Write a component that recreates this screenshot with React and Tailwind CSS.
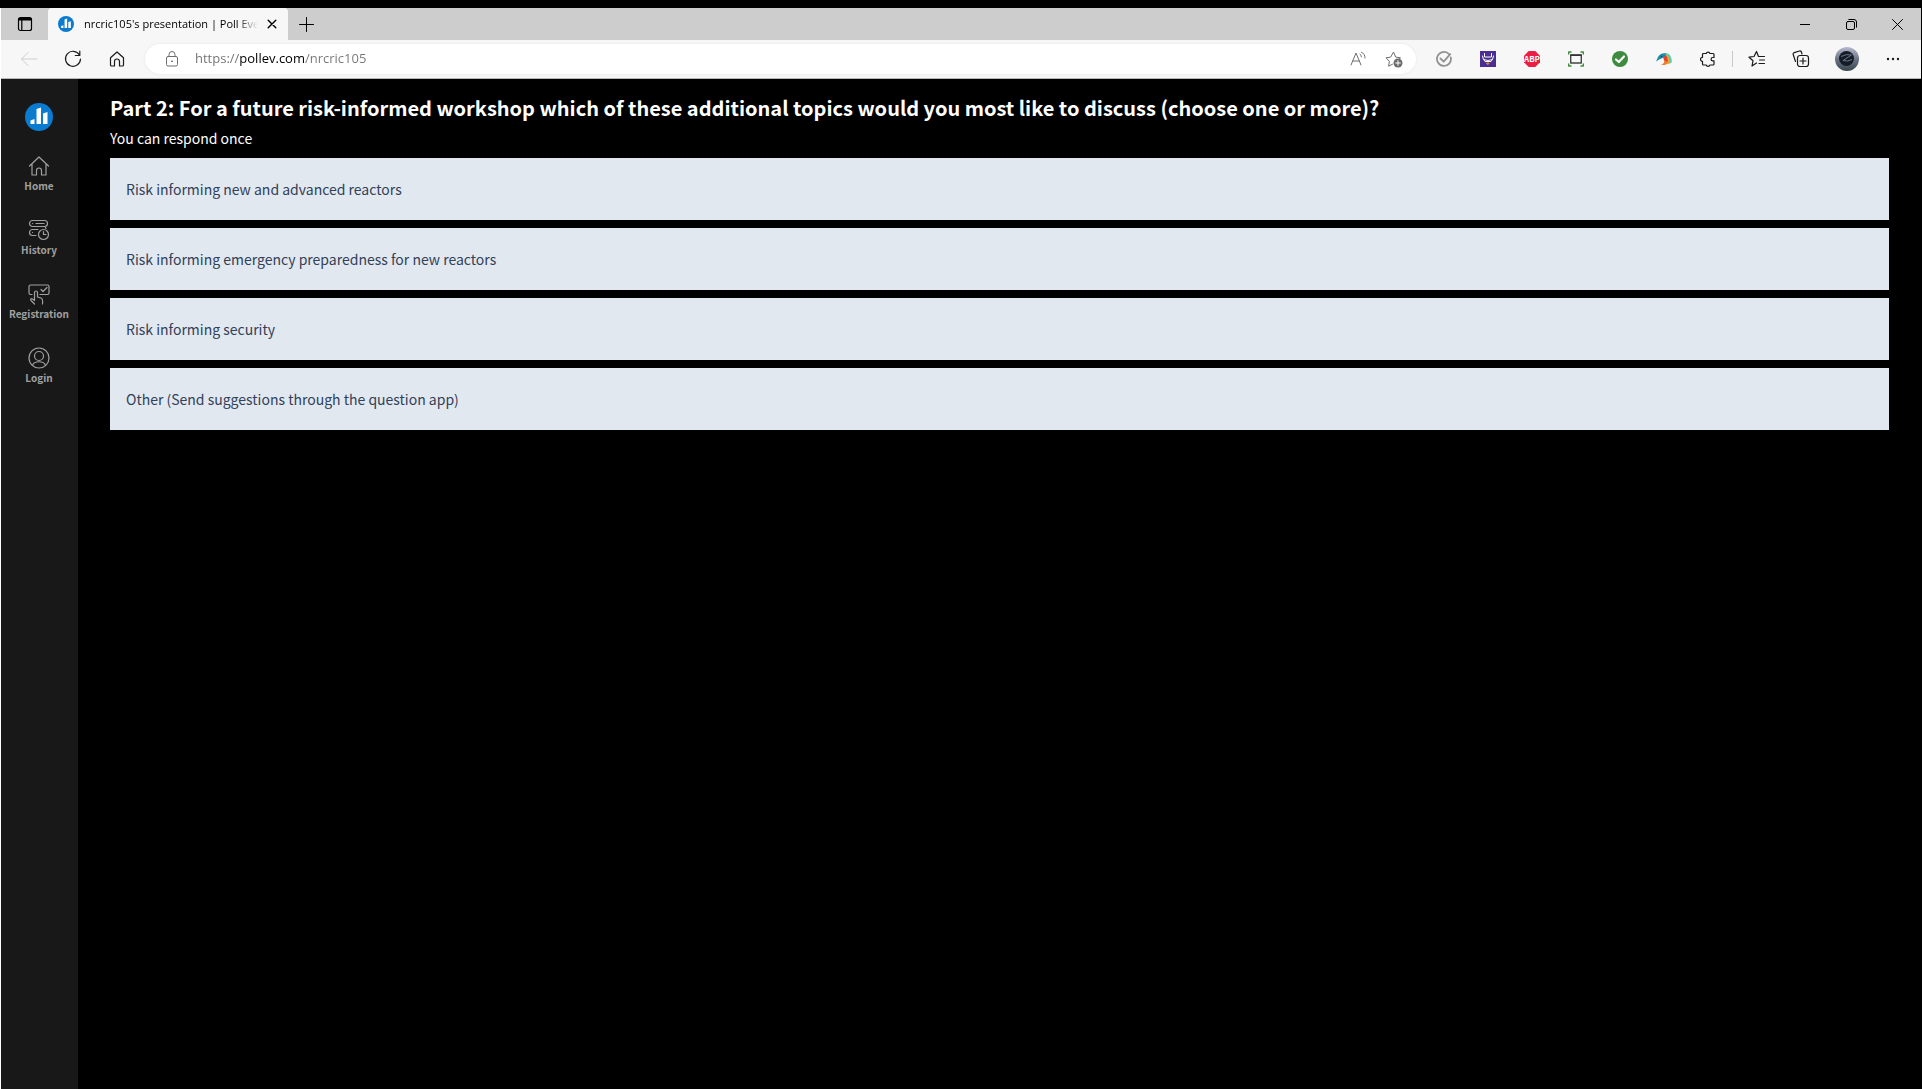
import React from "react";

const options = [
  "Risk informing new and advanced reactors",
  "Risk informing emergency preparedness for new reactors",
  "Risk informing security",
  "Other (Send suggestions through the question app)",
];

const Icon = ({ size = 18, box = 18, width = 1, className = "", children }) => (
  <svg
    width={size}
    height={size}
    viewBox={`0 0 ${box} ${box}`}
    fill="none"
    stroke="currentColor"
    strokeWidth={width}
    strokeLinecap="round"
    strokeLinejoin="round"
    className={`shrink-0 ${className}`}
    aria-hidden="true"
  >
    {children}
  </svg>
);

const PollLogo = ({ size }) => (
  <svg width={size} height={size} viewBox="0 0 28 28" className="shrink-0" aria-hidden="true">
    <circle cx="14" cy="14" r="14" fill="#0b7bd0" />
    <path d="M5.500 17.500l4-1.500v5h-4zM11.500 6l4.500-1.500v16.500h-4.500zM18 10.500l4.500-1.500v12h-4.500z" fill="#fff" />
  </svg>
);

const ToolButton = ({ label, className = "w-11", children }) => (
  <button type="button" aria-label={label} className={`flex h-8 shrink-0 items-center justify-center ${className}`}>
    {children}
  </button>
);

/* Barre des onglets */
const TabBar = () => (
  <div className="flex h-8 items-stretch bg-[#cdcdcd] text-black">
    <button type="button" aria-label="Tab actions" className="flex w-[47px] items-center justify-center">
      <Icon size={16} box={16} width={1.2}>
        <rect x="1.500" y="1.500" width="13" height="13" rx="2" />
        <path d="M2 3.800h12M2 2.600h12M4.800 4.500v9.500" />
      </Icon>
    </button>

    <div className="flex w-60 items-center rounded-t bg-[#f7f7f7] pl-2.5 pr-1.5">
      <PollLogo size={16} />
      <span className="ml-2.5 w-[174px] overflow-hidden whitespace-nowrap text-[11px] [mask-image:linear-gradient(to_right,black_88%,transparent)]">
        nrcric105's presentation | Poll Eve
      </span>
      <button type="button" aria-label="Close tab" className="ml-1 flex size-5 items-center justify-center">
        <Icon size={10} box={10} width={1.4}>
          <path d="M1.200 1.200l7.600 7.600M8.800 1.200l-7.600 7.600" />
        </Icon>
      </button>
    </div>

    <button type="button" aria-label="New tab" className="flex w-9 items-center justify-center">
      <Icon size={15} box={15}>
        <path d="M7.500.5v14M.5 7.500h14" />
      </Icon>
    </button>

    <div className="ml-auto flex">
      <button type="button" aria-label="Minimize" className="flex w-12 items-center justify-center">
        <Icon size={10} box={10}><path d="M0 5.500h10" /></Icon>
      </button>
      <button type="button" aria-label="Restore" className="flex w-11 items-center justify-center">
        <Icon size={11} box={11}>
          <rect x=".5" y="2.500" width="8" height="8" rx="1.500" />
          <path d="M2.800.5h5.200a2.500 2.500 0 0 1 2.500 2.500v5.200" />
        </Icon>
      </button>
      <button type="button" aria-label="Close" className="flex w-12 items-center justify-center">
        <Icon size={11} box={11}><path d="M.5.5l10 10M10.500.5l-10 10" /></Icon>
      </button>
    </div>
  </div>
);

/* Barre d'adresse et extensions */
const Toolbar = () => (
  <div className="flex h-[39px] items-center border-b border-[#b8b8b8] bg-[#f7f7f7] px-1.5 text-[#1b1b1b]">
    <ToolButton label="Back">
      <Icon className="text-[#cfcfcf]"><path d="M17 9H1.500M8 2.500L1.500 9 8 15.500" /></Icon>
    </ToolButton>
    <ToolButton label="Refresh">
      <Icon width={1.2}><path d="M15.500 5A7.500 7.500 0 1 0 16.500 9M15.800 1v4.500h-4.500" /></Icon>
    </ToolButton>
    <ToolButton label="Home">
      <Icon size={16} box={16} width={1.2}>
        <path d="M1.500 6.800L8 1l6.500 5.800v7.200a1 1 0 0 1-1 1h-3v-4.500a2.500 2.500 0 0 0-5 0v4.500h-3a1 1 0 0 1-1-1z" />
      </Icon>
    </ToolButton>

    <div className="mx-1.5 flex h-[30px] min-w-0 flex-1 items-center rounded-full bg-white text-[#6e6e6e] shadow-[0_0_3px_rgba(0,0,0,0.08)]">
      <span className="flex w-[50px] justify-center pl-1">
        <Icon size={16} box={16}>
          <rect x="2.500" y="5.500" width="11" height="9.500" rx="1.500" />
          <path d="M5 5.500V3.500a3 3 0 0 1 6 0v2" />
          <circle cx="8" cy="10.300" r=".5" fill="currentColor" />
        </Icon>
      </span>
      <input
        aria-label="Address"
        defaultValue="https://pollev.com/nrcric105"
        className="min-w-0 flex-1 bg-[linear-gradient(to_right,#6f6f6f_44px,#000_44px,#000_110px,#767676_110px)] bg-clip-text text-[13px] text-transparent caret-black outline-none"
      />
      <ToolButton label="Read aloud" className="w-9">
        <Icon size={16} box={16}>
          <path d="M1 14L6 2l5 12M2.800 10h6.400M10 3.200a3 3 0 0 1 1.500 2.600M11.500 1.200a6 6 0 0 1 3.500 5.800" />
        </Icon>
      </ToolButton>
      <ToolButton label="Add to favorites" className="mr-1 w-9">
        <Icon>
          <path d="M7.500 14.200l-3.900 2 .8-4.900L1 7.800l4.700-.7L8.500 2l2.200 5.100 4.800.7-1.500 1.300" />
          <circle cx="13" cy="13" r="4.500" fill="#6b6b6b" stroke="none" />
          <path d="M13 10.700v4.600M10.700 13h4.600" stroke="#fff" />
        </Icon>
      </ToolButton>
    </div>

    <ToolButton label="Coupons">
      <Icon size={16} box={16} width={1.800} className="text-[#929292]">
        <path d="M12.500 2.600a7 7 0 1 0 2.300 3.800M4.500 7.500l3.200 3.200 6.500-7.500" />
      </Icon>
    </ToolButton>
    <ToolButton label="Reader extension">
      <Icon size={16} box={16} className="bg-[#4b2e91] text-white">
        <path d="M4.500 2.500v3.500h7V2.500M2.500 5l1 3.500q4.500 2 9 0l1-3.500M4 9l1 1.500h6l1-1.500" />
        <path d="M6.800 12h2.400l-1.200 1.500z" stroke="#d98c3d" fill="#d98c3d" />
      </Icon>
    </ToolButton>
    <ToolButton label="Adblock Plus">
      <svg width="16" height="16" viewBox="0 0 16 16">
        <path d="M4.700 0h6.600L16 4.700v6.600L11.300 16H4.700L0 11.300V4.700z" fill="#ed1e45" />
        <text x="8" y="11" textAnchor="middle" fontSize="8" fontWeight="700" fill="#fff" className="font-['Noto_Sans_CJK_SC',sans-serif]">ABP</text>
      </svg>
    </ToolButton>
    <ToolButton label="Screenshot">
      <Icon size={16} box={16} width={1.400}>
        <path d="M.7 3V1H3M13 1h2.300v2M15.300 13v2H13M3 15H.7v-2" stroke="#3f8f3f" />
        <rect x="2.700" y="4" width="10.600" height="8" stroke="#444" />
        <path d="M2.700 4.200h10.600" stroke="#333" />
      </Icon>
    </ToolButton>
    <ToolButton label="Safe site">
      <Icon size={16} box={16} width={2.200}>
        <circle cx="8" cy="8" r="8" fill="#3d8b3f" stroke="none" />
        <path d="M4 8.500l2.800 2.500L12 5.500" stroke="#fff" />
      </Icon>
    </ToolButton>
    <ToolButton label="Kingfisher">
      <svg width="16" height="16" viewBox="0 0 16 16">
        <path d="M9 2c4 0 7 3 6.800 9.500l-3.300 1.500-4-6z" fill="#56cfae" />
        <path d="M9.500 3.500c3 1 4.500 4 4 9l-3.500.5-2-5z" fill="#f2a33a" />
        <path d="M9 3.500c2.500 1.500 3 4.500 2.500 8l-3.500-2-1-4z" fill="#e2452a" />
        <path d="M0 10.500L2 6c1.500-3 5-4.500 8-3.500-1 3-3 5-6 5.500z" fill="#1a8ca8" />
        <path d="M5 13.500c2 0 3-1.500 3.500-4l3 3c-1.500 1.500-4 2-6.500 1z" fill="#ef7d2b" />
        <circle cx="5.500" cy="5.500" r=".8" fill="#0b3d4f" />
      </svg>
    </ToolButton>
    <ToolButton label="Extensions">
      <Icon size={16} box={16} width={1.200}>
        <path d="M3.500 2.500h2.700a2 2 0 0 1 3.800 0h3a1 1 0 0 1 1 1v3h-1.200a1.700 1.700 0 0 0 0 3.400H14V13a1 1 0 0 1-1 1h-3a2 2 0 0 1-3.800 0H3.500a1 1 0 0 1-1-1v-2.700a2 2 0 0 1 0-4V3.500a1 1 0 0 1 1-1z" />
      </Icon>
    </ToolButton>

    <div className="mx-0.5 h-4 w-px bg-[#c8c8c8]" />

    <ToolButton label="Favorites">
      <Icon width={1.200}>
        <path d="M8.500 13l-4.500 3 1-5.200L1 7.200l5-.7L8.500 1.500l2 5h6M11.500 10h5M11 13.500h5.500" />
      </Icon>
    </ToolButton>
    <ToolButton label="Collections">
      <Icon width={1.200}>
        <path d="M3.500 11.500L1.200 4.500a1.500 1.500 0 0 1 1-1.900L7.500 1a1.500 1.500 0 0 1 1.900 1L10 4" />
        <rect x="5.500" y="5.500" width="11" height="11" rx="2.500" fill="#f7f7f7" />
        <path d="M11 8v6M8 11h6" />
      </Icon>
    </ToolButton>
    <ToolButton label="Profile" className="w-12">
      <svg width="24" height="24" viewBox="0 0 24 24">
        <defs>
          <linearGradient id="avatar" x1="0" y1="0" x2="0" y2="1">
            <stop offset="0" stopColor="#b9b9cf" />
            <stop offset=".55" stopColor="#65717f" />
            <stop offset="1" stopColor="#39454c" />
          </linearGradient>
        </defs>
        <circle cx="12" cy="12" r="12" fill="url(#avatar)" />
        <circle cx="11.500" cy="11.500" r="7.500" fill="#161c26" />
        <path d="M6 9.500q6-3 10.500-1.500L8 13.500q5 1.500 9-1" fill="none" stroke="#65788a" />
      </svg>
    </ToolButton>
    <ToolButton label="Settings and more">
      <svg width="14" height="4" viewBox="0 0 14 4" fill="#1b1b1b">
        <circle cx="2" cy="2" r="1.200" />
        <circle cx="7" cy="2" r="1.200" />
        <circle cx="12" cy="2" r="1.200" />
      </svg>
    </ToolButton>
  </div>
);

const links = [
  {
    name: "Home",
    icon: <path d="M1.500 11L11 2l9.500 9M4 9v11h4.500v-4.500a2.500 2.500 0 0 1 5 0V20H18V9" />,
  },
  {
    name: "History",
    icon: (
      <>
        <path d="M4.500 1.500h12a3 3 0 0 1 0 6h-12a3 3 0 0 1 0-6zM8 4.500h8M4.500 4.500h.1M10 10.500H4.500a3 3 0 0 0 0 6H8M4.500 13.500h.1M17 7.500l1 2" />
        <circle cx="15.500" cy="15.500" r="5" />
        <path d="M15.500 12.500v3h2.500" />
      </>
    ),
  },
  {
    name: "Registration",
    icon: (
      <>
        <path d="M4 11.500H2.500a1.500 1.500 0 0 1-1.500-1.500V3.500A1.500 1.500 0 0 1 2.500 2h17A1.500 1.500 0 0 1 21 3.500V10a1.500 1.500 0 0 1-1.500 1.500H12M13 6.500l2 2 4-4" />
        <path d="M6.500 21L3 17.500c-1-1.500.5-2.500 1.500-1.500L6.500 17.500V9.500a1.500 1.500 0 0 1 3 0V14l3.500 1c1.500.5 2 1.500 1.500 6" />
      </>
    ),
  },
  {
    name: "Login",
    icon: (
      <>
        <circle cx="11" cy="11" r="10" />
        <circle cx="11" cy="9" r="4.500" />
        <path d="M4.500 18.500c1.500-5 11.500-5 13 0" />
      </>
    ),
  },
];

const Sidebar = () => (
  <nav className="flex w-[77px] shrink-0 flex-col items-center bg-[#181818] pr-px pt-6 font-['Noto_Sans_CJK_SC',sans-serif] text-[#a0a0a0]">
    <a href="#" aria-label="Poll Everywhere" className="mb-6">
      <PollLogo size={28} />
    </a>
    {links.map(({ name, icon }) => (
      <a key={name} href="#" className="flex h-16 flex-col items-center">
        <Icon size={22} box={22} width={1.200}>{icon}</Icon>
        <span className="mt-0.5 text-[10px] font-bold leading-[14px]">{name}</span>
      </a>
    ))}
  </nav>
);

const Poll = () => (
  <main className="flex-1 px-8 pt-[15px] font-['Noto_Sans_CJK_SC',sans-serif]">
    <h1 className="text-xl font-bold leading-7 text-white">
      Part 2: For a future risk-informed workshop which of these additional topics would you most like to discuss (choose one or more)?
    </h1>
    <p className="mt-1 text-sm leading-6 text-white">You can respond once</p>
    <div className="mt-2 flex flex-col gap-2">
      {options.map((option) => (
        <button key={option} type="button" className="h-[62px] bg-slate-200 px-4 text-left text-sm text-slate-700">
          {option}
        </button>
      ))}
    </div>
  </main>
);

const App = () => {
  return (
    <div className="flex min-h-screen flex-col bg-black pr-px pt-2 font-['Open_Sans',sans-serif]">
      <div className="flex flex-1 flex-col border-l border-white">
        <TabBar />
        <Toolbar />
        <div className="flex flex-1 bg-black">
          <Sidebar />
          <Poll />
        </div>
      </div>
    </div>
  );
};

export default App;
